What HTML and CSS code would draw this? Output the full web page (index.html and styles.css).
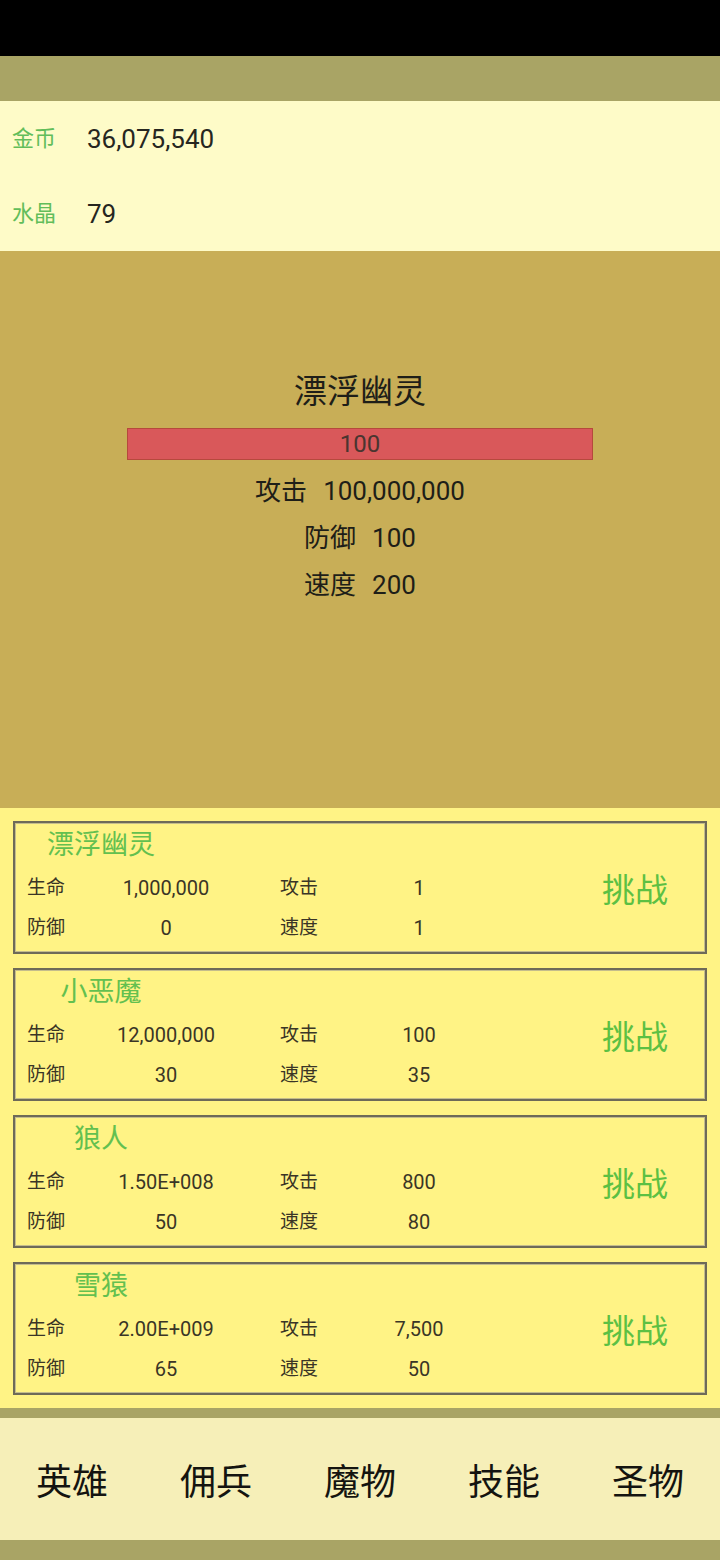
FILE: index.html
```html
<!DOCTYPE html>
<html>
<head>
  <meta charset="utf-8">
  <title>魔物</title>
  <link rel="stylesheet" href="styles.css">
</head>
<body>
  <div class="statusbar"></div>
  <div class="topbar"></div>

  <div class="resources">
    <div class="res-row"><span class="res-label">金币</span><span class="res-value">36,075,540</span></div>
    <div class="res-row"><span class="res-label">水晶</span><span class="res-value">79</span></div>
  </div>

  <div class="battle">
    <div class="boss-name">漂浮幽灵</div>
    <div class="hp-bar">100</div>
    <div class="boss-stat"><span>攻击</span><span class="num">100,000,000</span></div>
    <div class="boss-stat"><span>防御</span><span class="num">100</span></div>
    <div class="boss-stat"><span>速度</span><span class="num">200</span></div>
  </div>

  <div class="monster-list">
    <div class="card">
      <div class="info">
        <div class="name">漂浮幽灵</div>
        <div class="stats">
          <span class="lbl">生命</span><span class="val">1,000,000</span>
          <span class="lbl">攻击</span><span class="val">1</span>
          <span class="lbl">防御</span><span class="val">0</span>
          <span class="lbl">速度</span><span class="val">1</span>
        </div>
      </div>
      <button class="challenge">挑战</button>
    </div>
    <div class="card">
      <div class="info">
        <div class="name">小恶魔</div>
        <div class="stats">
          <span class="lbl">生命</span><span class="val">12,000,000</span>
          <span class="lbl">攻击</span><span class="val">100</span>
          <span class="lbl">防御</span><span class="val">30</span>
          <span class="lbl">速度</span><span class="val">35</span>
        </div>
      </div>
      <button class="challenge">挑战</button>
    </div>
    <div class="card">
      <div class="info">
        <div class="name">狼人</div>
        <div class="stats">
          <span class="lbl">生命</span><span class="val">1.50E+008</span>
          <span class="lbl">攻击</span><span class="val">800</span>
          <span class="lbl">防御</span><span class="val">50</span>
          <span class="lbl">速度</span><span class="val">80</span>
        </div>
      </div>
      <button class="challenge">挑战</button>
    </div>
    <div class="card">
      <div class="info">
        <div class="name">雪猿</div>
        <div class="stats">
          <span class="lbl">生命</span><span class="val">2.00E+009</span>
          <span class="lbl">攻击</span><span class="val">7,500</span>
          <span class="lbl">防御</span><span class="val">65</span>
          <span class="lbl">速度</span><span class="val">50</span>
        </div>
      </div>
      <button class="challenge">挑战</button>
    </div>
    <div class="card"></div>
  </div>

  <div class="divider"></div>

  <div class="nav">
    <div class="nav-item">英雄</div>
    <div class="nav-item">佣兵</div>
    <div class="nav-item">魔物</div>
    <div class="nav-item">技能</div>
    <div class="nav-item">圣物</div>
  </div>
  <div class="bottombar"></div>
</body>
</html>
```

FILE: styles.css
```css
* {
  margin: 0;
  padding: 0;
  box-sizing: border-box;
}

body {
  width: 720px;
  height: 1560px;
  overflow: hidden;
  font-family: Roboto, "Noto Sans CJK SC", sans-serif;
  color: #2a2a22;
  background-color: #a9a465;
}

.statusbar {
  height: 56px;
  background-color: #000000;
}

.topbar {
  height: 45px;
  background-color: #a9a465;
}

/* coins and crystals */
.resources {
  height: 150px;
  background-color: #fefbc8;
  padding-left: 12px;
}

.res-row {
  height: 75px;
  display: flex;
  align-items: center;
}

.res-label {
  width: 75px;
  font-size: 22px;
  line-height: 26px;
  color: #62bd5a;
}

.res-value {
  font-size: 26px;
  color: #262620;
}

/* current monster */
.battle {
  height: 557px;
  background-color: #c8ae57;
  padding-top: 119px;
  display: flex;
  flex-direction: column;
  align-items: center;
}

.boss-name {
  font-size: 33px;
  line-height: 44px;
  color: #1e1e18;
}

.hp-bar {
  width: 466px;
  height: 32px;
  margin-top: 14px;
  margin-bottom: 8px;
  background-color: #d9585a;
  border: 1px solid #b6493c;
  text-align: center;
  font-size: 24px;
  line-height: 30px;
  color: #4a3530;
}

.boss-stat {
  font-size: 26px;
  line-height: 47px;
  color: #1e1e18;
}

.boss-stat .num {
  margin-left: 16px;
}

/* monster list */
.monster-list {
  height: 600px;
  overflow: hidden;
  background-color: #fff385;
  padding: 13px 13px 0 13px;
  display: flex;
  flex-direction: column;
  gap: 14px;
}

.card {
  flex-shrink: 0;
  height: 133px;
  border: 2px solid #6e6a58;
  box-shadow: inset 0 0 0 1px #c4bc8c;
  background-color: #fff385;
  display: flex;
  padding: 6px 3px 3px 3px;
}

.info {
  width: 550px;
}

.name {
  width: 166px;
  text-align: center;
  font-size: 27px;
  line-height: 32px;
  margin-bottom: 7px;
  color: #63c04f;
}

.stats {
  display: grid;
  grid-template-columns: 85px 108px 60px 85px 108px;
  padding-left: 9px;
}

.stats .lbl:nth-child(4n+3) {
  grid-column: 4;
}

.lbl {
  font-size: 19px;
  line-height: 40px;
  color: #3a3526;
}

.val {
  font-size: 20px;
  line-height: 40px;
  text-align: center;
  color: #3a3526;
}

.challenge {
  flex: 1;
  background: none;
  border: none;
  font-family: Roboto, "Noto Sans CJK SC", sans-serif;
  font-size: 33px;
  color: #5cc043;
  padding-bottom: 2px;
  cursor: pointer;
}

.divider {
  height: 10px;
  background-color: #a9a465;
}

/* bottom tabs */
.nav {
  height: 122px;
  background-color: #f6efb8;
  display: grid;
  grid-template-columns: repeat(5, 1fr);
  align-items: center;
}

.nav-item {
  text-align: center;
  font-size: 36px;
  color: #141410;
}

.bottombar {
  height: 20px;
  background-color: #a9a465;
}
```
